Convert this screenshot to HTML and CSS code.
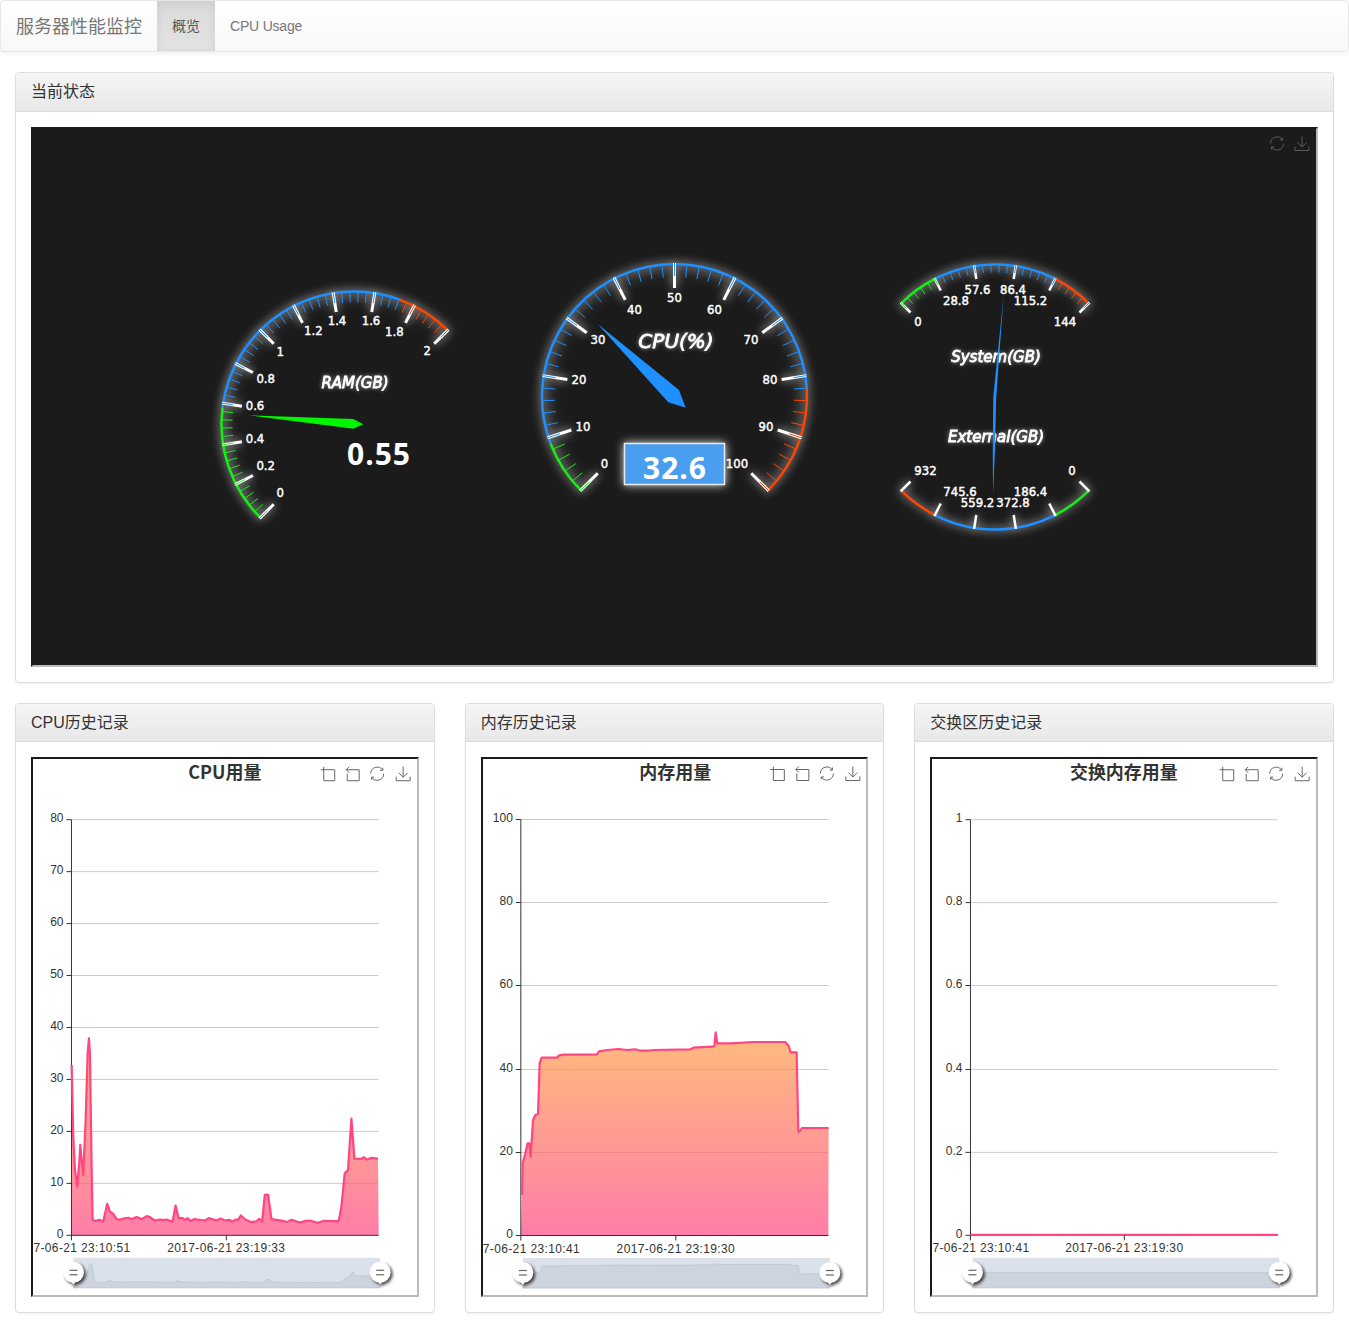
FILE: index.html

```html
<!DOCTYPE html>
<html lang="zh-CN">
<head>
    <meta charset="UTF-8">
    <title>服务器性能监控</title>
    <link rel="stylesheet" href="styles.css">
</head>
<body>

<nav class="navbar">
    <a class="brand" href="#">服务器性能监控</a>
    <a class="nav-item active" href="#">概览</a>
    <a class="nav-item" href="#">CPU Usage</a>
</nav>

<div class="container">
    <div class="panel">
        <div class="panel-heading">当前状态</div>
        <div class="panel-body">
            <div class="chart chart-dark" id="gauges"></div>
        </div>
    </div>

    <div class="row">
        <div class="panel">
            <div class="panel-heading">CPU历史记录</div>
            <div class="panel-body">
                <div class="chart" id="cpuChart"></div>
            </div>
        </div>
        <div class="panel">
            <div class="panel-heading">内存历史记录</div>
            <div class="panel-body">
                <div class="chart" id="memChart"></div>
            </div>
        </div>
        <div class="panel">
            <div class="panel-heading">交换区历史记录</div>
            <div class="panel-body">
                <div class="chart" id="swapChart"></div>
            </div>
        </div>
    </div>
</div>

<script src="charts.js"></script>
</body>
</html>
```

FILE: styles.css

```css
body { margin: 0; font-family: "Liberation Sans", "Noto Sans CJK SC", sans-serif; font-size: 14px; color: #333; background: #fff; }
a { text-decoration: none; }

.navbar { display: flex; height: 52px; box-sizing: border-box; margin-bottom: 20px; border: 1px solid #e7e7e7; border-radius: 4px; background: linear-gradient(#fff, #f8f8f8); box-shadow: 0 1px 5px rgba(0, 0, 0, .075); }
.brand { padding: 1px 15px 0 15px; font-size: 18px; line-height: 50px; color: #777; }
.nav-item { padding: 0 15px; line-height: 50px; color: #777; letter-spacing: -.2px; }
.nav-item.active { color: #555; letter-spacing: 0; background: linear-gradient(#dbdbdb, #e2e2e2); box-shadow: inset 0 3px 9px rgba(0, 0, 0, .075); }

.container { padding: 0 15px; }
.row { display: grid; grid-template-columns: repeat(3, 1fr); gap: 30px; }

.panel { margin-bottom: 20px; border: 1px solid #ddd; border-radius: 4px; background: #fff; box-shadow: 0 1px 2px rgba(0, 0, 0, .05); }
.panel-heading { padding: 10px 15px; font-size: 16px; line-height: 17.6px; color: #333; border-bottom: 1px solid #ddd; border-radius: 3px 3px 0 0; background: linear-gradient(#f5f5f5, #e8e8e8); }
.panel-body { padding: 15px; }

.chart { height: 540px; box-sizing: border-box; border: 2px solid; border-color: #1b1b1b #bbb #bbb #1b1b1b; background: #fff; overflow: hidden; }
.chart-dark { background: #1b1b1b; }
.chart svg { display: block; width: 100%; height: 100%; }

/* gauges */
.glow { filter: drop-shadow(0 0 5px rgba(255, 255, 255, .9)); }
.gauge-label { font-family: "DejaVu Sans", sans-serif; font-size: 11.7px; fill: #fff; stroke: #fff; stroke-width: .45px; text-anchor: middle; dominant-baseline: central; }
.gauge-title { font-family: "DejaVu Sans", sans-serif; font-style: italic; fill: #fff; stroke: #fff; stroke-width: .8px; text-anchor: middle; dominant-baseline: central; filter: drop-shadow(0 0 2px rgba(255, 255, 255, .5)); }
.gauge-title.big { font-size: 20px; }
.gauge-title.mid { font-size: 15px; }
.gauge-value { font-family: "Open Sans", sans-serif; font-size: 30px; font-weight: 700; letter-spacing: 1px; fill: #fff; text-anchor: middle; dominant-baseline: central; }
.value-box { fill: #4a9ef0; stroke: #e8e8e8; stroke-width: 1.5px; }

/* line charts */
.chart-title { font-family: "Noto Sans CJK SC", "Liberation Sans", sans-serif; font-size: 18px; font-weight: 700; fill: #333; text-anchor: middle; dominant-baseline: central; }
.axis-label { font-family: "Liberation Sans", sans-serif; font-size: 12px; fill: #333; dominant-baseline: central; }
.axis-label.end { text-anchor: end; }
.axis-label.mid { text-anchor: middle; letter-spacing: .37px; }
.grid-line { stroke: #ccc; stroke-width: 1; }
.axis-line { stroke: #333; stroke-width: 1; fill: none; }
.series-line { fill: none; stroke: #ff4683; stroke-width: 2.2; stroke-linejoin: round; }
.tool-icon { fill: none; stroke: #666; stroke-width: 1; }
.tool-icon.dim { stroke: #5a5a5a; }
.slider-bg { fill: #dbe1ea; }
.slider-shadow { fill: #ced4de; stroke: #c2c9d4; stroke-width: 1; }
.handle { filter: drop-shadow(2px 2px 1.5px rgba(0, 0, 0, .7)); }
.handle-body { fill: #fff; }
.handle-bar { stroke: #666; stroke-width: 1.2; }
```

FILE: charts.js

```javascript
const NS = "http://www.w3.org/2000/svg";
const BLUE = "#1e90ff", GREEN = "#14f014", RED = "#ff4500";

function el(parent, tag, attrs, text) {
    const node = document.createElementNS(NS, tag);
    for (const k in attrs) node.setAttribute(k, attrs[k]);
    if (text !== undefined) node.textContent = text;
    parent.appendChild(node);
    return node;
}

function polar(cx, cy, r, deg) {
    const a = deg * Math.PI / 180;
    return [cx + r * Math.cos(a), cy - r * Math.sin(a)];
}

function makeSvg(id, viewBox) {
    return el(document.getElementById(id), "svg", { viewBox: viewBox });
}

function colorAt(ranges, f) {
    for (const r of ranges) if (f <= r[0] + 0.0001) return r[1];
    return ranges[ranges.length - 1][1];
}

function drawGauge(svg, g) {
    const group = el(svg, "g", { class: "glow" });
    const span = g.end - g.start;
    const ang = f => g.start + span * f;
    let from = 0;
    g.ranges.forEach(r => {
        const p1 = polar(g.cx, g.cy, g.r, ang(from));
        const p2 = polar(g.cx, g.cy, g.r, ang(r[0]));
        const large = Math.abs(span * (r[0] - from)) > 180 ? 1 : 0;
        el(group, "path", {
            d: `M${p1[0]} ${p1[1]}A${g.r} ${g.r} 0 ${large} ${span < 0 ? 1 : 0} ${p2[0]} ${p2[1]}`,
            fill: "none", stroke: r[1], "stroke-width": 2.5
        });
        from = r[0];
    });
    const line = (a, r1, r2, color, w) => {
        const p1 = polar(g.cx, g.cy, r1, a), p2 = polar(g.cx, g.cy, r2, a);
        el(group, "line", { x1: p1[0], y1: p1[1], x2: p2[0], y2: p2[1], stroke: color, "stroke-width": w });
    };
    const total = g.splits * 5;
    for (let i = 0; i <= total; i++) {
        const f = i / total;
        if (i % 5 === 0) {
            line(ang(f), g.r + 1, g.r + 1 - g.major, "#fff", g.majorWidth);
            if (g.minor) line(ang(f), g.r + 1, g.r + 1 - g.minor, colorAt(g.ranges, f), 1);
        } else if (g.minor) {
            line(ang(f), g.r, g.r - g.minor, colorAt(g.ranges, f), 1);
        }
    }
    g.labels.forEach(l => el(svg, "text", { class: "gauge-label", x: l[1], y: l[2] }, l[0]));
}

function drawGauges() {
    const svg = makeSvg("gauges", "33 129 1283 536");

    drawGauge(svg, {
        cx: 354, cy: 424, r: 132.5, start: 225, end: 45, splits: 10, major: 20, minor: 11, majorWidth: 3,
        ranges: [[0.29, GREEN], [0.86, BLUE], [1, RED]],
        labels: [["0", 280.3, 493.3], ["0.2", 265.7, 465.7], ["0.4", 255, 439.3], ["0.6", 255, 405.7], ["0.8", 265.7, 378.7],
            ["1", 280.3, 351.7], ["1.2", 313.3, 331.3], ["1.4", 337, 320.7], ["1.6", 371, 320.7], ["1.8", 394.3, 331.7], ["2", 427.3, 351.3]]
    });
    el(svg, "text", { class: "gauge-title mid", x: 355, y: 382.7 }, "RAM(GB)");
    el(svg, "polygon", { points: "249.3,415.3 353.3,419 363.3,424.3 353.3,428.7", fill: "#00f500" });
    el(svg, "text", { class: "gauge-value", x: 379, y: 453 }, "0.55");

    drawGauge(svg, {
        cx: 674.5, cy: 396.5, r: 132.5, start: 225, end: -45, splits: 10, major: 25, minor: 13, majorWidth: 3,
        ranges: [[0.09, GREEN], [0.82, BLUE], [1, RED]],
        labels: [["0", 604.5, 463.5], ["10", 583, 427], ["20", 579, 379.5], ["30", 598, 340], ["40", 634.5, 309.5], ["50", 674.5, 297.5],
            ["60", 714.5, 309.5], ["70", 751, 340], ["80", 770, 379.5], ["90", 766, 427], ["100", 737, 463.5]]
    });
    el(svg, "text", { class: "gauge-title big", x: 676, y: 341 }, "CPU(%)");
    el(svg, "polygon", { points: "597.7,324 679,390 685.7,407.7 668.3,402.3", fill: BLUE });
    el(svg, "rect", { class: "value-box glow", x: 624.5, y: 443.5, width: 100, height: 41 });
    el(svg, "text", { class: "gauge-value", x: 675, y: 467 }, "32.6");

    drawGauge(svg, {
        cx: 995, cy: 397, r: 132.5, start: 135, end: 45, splits: 5, major: 14, minor: 8, majorWidth: 2.5,
        ranges: [[0.2, GREEN], [0.8, BLUE], [1, RED]],
        labels: [["0", 918, 321.5], ["28.8", 956, 300.5], ["57.6", 977.5, 290], ["86.4", 1013, 290], ["115.2", 1030.5, 300.5], ["144", 1065, 321.5]]
    });
    drawGauge(svg, {
        cx: 995, cy: 397, r: 132.5, start: 225, end: 315, splits: 5, major: 14, minor: 0, majorWidth: 2.5,
        ranges: [[0.2, RED], [0.8, BLUE], [1, GREEN]],
        labels: [["932", 925.5, 470.5], ["745.6", 960, 491.5], ["559.2", 977.5, 502.5], ["372.8", 1013, 502.5], ["186.4", 1030.5, 491.5], ["0", 1072, 470.5]]
    });
    el(svg, "text", { class: "gauge-title mid", x: 996, y: 356.5 }, "System(GB)");
    el(svg, "text", { class: "gauge-title mid", x: 996, y: 436.5 }, "External(GB)");
    el(svg, "polygon", { points: "1003.7,295 996.2,397 995,450 993,495 992.8,450 993.3,397", fill: BLUE });

    toolIcon(svg, "refresh", 1270, 136.5, true);
    toolIcon(svg, "download", 1295, 136.5, true);
}

function toolIcon(svg, name, x, y, dim) {
    const paths = {
        zoom: "M3 0V14H14V3H0",
        back: "M2 7V14H14V3H1M4 0L1 3L4 6",
        refresh: "M.5 7A6.5 6.5 0 0 1 12.5 3.5M13.5 7A6.5 6.5 0 0 1 1.5 10.5M12.6 1V3.6H10M1.4 13V10.4H4",
        download: "M7 0V10.5M2.5 6L7 10.5L11.5 6M0 10V14H14V10"
    };
    el(svg, "path", {
        class: dim ? "tool-icon dim" : "tool-icon",
        d: paths[name], transform: `translate(${x} ${y})`
    });
}

function drawHandle(svg, x) {
    const g = el(svg, "g", { class: "handle" });
    el(g, "circle", { class: "handle-body", cx: x, cy: 1272.5, r: 10.5 });
    el(g, "polygon", { class: "handle-body", points: `${x - 2},1282 ${x + 2},1282 ${x},1285` });
    el(g, "line", { class: "handle-bar", x1: x - 4, y1: 1270.5, x2: x + 4, y2: 1270.5 });
    el(g, "line", { class: "handle-bar", x1: x - 4, y1: 1275, x2: x + 4, y2: 1275 });
}

function drawLineChart(id, c) {
    const svg = makeSvg(id, c.viewBox);
    const x0 = c.axis + 0.5, x1 = x0 + 307.5;
    const top = 819.5, bottom = 1235.5, n = c.yLabels.length - 1;

    el(svg, "text", { class: "chart-title", x: c.titleX, y: 771 }, c.title);
    ["zoom", "back", "refresh", "download"].forEach((name, i) => {
        toolIcon(svg, name, c.axis + [250, 274.5, 299.5, 325.5][i], 766.5);
    });

    c.yLabels.forEach((label, i) => {
        const y = Math.round(bottom - i * (bottom - top) / n - 0.5) + 0.5;
        if (i > 0) el(svg, "line", { class: "grid-line", x1: x0, y1: y, x2: x1, y2: y });
        el(svg, "line", { class: "axis-line", x1: x0 - 5, y1: y, x2: x0, y2: y });
        el(svg, "text", { class: "axis-label end", x: x0 - 8, y: y - 1.5 }, label);
    });

    const defs = el(svg, "defs", {});
    const grad = el(defs, "linearGradient", { id: id + "Fill", x1: 0, y1: 0, x2: 0, y2: 1 });
    el(grad, "stop", { offset: 0, "stop-color": "#ff9e44", "stop-opacity": .7 });
    el(grad, "stop", { offset: 1, "stop-color": "#ff4683", "stop-opacity": .7 });

    const pts = c.points.map(p => p.join(",")).join(" ");
    el(svg, "polygon", { points: `${x0},${bottom} ${pts} ${x1},${bottom}`, fill: `url(#${id}Fill)` });

    el(svg, "line", { class: "axis-line", x1: x0, y1: top, x2: x0, y2: bottom });
    el(svg, "line", { class: "axis-line", x1: x0, y1: bottom, x2: x1, y2: bottom });
    el(svg, "polyline", { class: "series-line", points: pts });
    c.xTicks.forEach(t => {
        el(svg, "line", { class: "axis-line", x1: t[0], y1: bottom, x2: t[0], y2: bottom + 5 });
        el(svg, "text", { class: "axis-label mid", x: t[0], y: 1248.5 }, t[1]);
    });

    // data zoom under the chart
    const sx0 = c.axis + 2.5, sw = 307;
    el(svg, "rect", { class: "slider-bg", x: sx0, y: 1258, width: sw, height: 30 });
    const shadow = c.points.map(p => {
        const v = (1235 - p[1]) / c.shadow.unit;
        return `${sx0 + (p[0] - x0) / 307.5 * sw},${c.shadow.base - v * c.shadow.scale}`;
    }).join(" ");
    el(svg, "polygon", { class: "slider-shadow", points: `${sx0},1288 ${shadow} ${sx0 + sw},1288` });
    drawHandle(svg, sx0);
    drawHandle(svg, sx0 + sw);
}

const toPage = (list, ox, oy) => list.map(p => [+(ox + p[0] / 3).toFixed(1), +(oy + p[1] / 3).toFixed(1)]);

const cpuPoints = toPage([[155,135],[160,350],[165,450],[172,500],[178,430],[181,375],[185,420],[190,465],[197,300],[203,100],[207,55],[210,100],[215,450],[218,600],[228,604],[238,600],[250,605],[262,552],[270,575],[280,582],[290,598],[300,600],[310,596],[325,594],[335,598],[350,592],[365,598],[380,589],[390,592],[405,602],[420,599],[430,601],[440,599],[458,606],[467,557],[476,594],[488,595],[495,600],[503,595],[513,604],[522,598],[555,602],[567,595],[590,602],[602,596],[615,602],[628,600],[638,605],[648,599],[655,600],[663,587],[675,598],[690,606],[710,605],[718,597],[727,606],[735,525],[745,524],[755,598],[790,603],[800,607],[815,600],[840,608],[855,604],[870,602],[895,609],[912,603],[945,604],[957,604],[965,560],[975,460],[985,450],[995,296],[1004,416],[1025,417],[1032,412],[1042,419],[1055,414],[1075,416]], 20, 1020);

const memPoints = toPage([[155,525],[157,430],[165,400],[172,370],[177,370],[181,410],[188,300],[195,285],[203,282],[208,130],[214,113],[260,113],[265,107],[280,104],[380,103],[386,94],[410,90],[445,87],[470,90],[495,88],[510,92],[535,92],[550,90],[660,88],[670,83],[725,80],[732,78],[736,37],[741,70],[780,70],[850,66],[945,66],[955,78],[961,97],[979,97],[984,335],[990,332],[995,324],[1075,324]], 471, 1020);

drawGauges();

drawLineChart("cpuChart", {
    viewBox: "33 759 384 536", axis: 71, title: "CPU用量", titleX: 225,
    yLabels: ["0", "10", "20", "30", "40", "50", "60", "70", "80"],
    points: cpuPoints,
    xTicks: [[71.5, "2017-06-21 23:10:51"], [226.5, "2017-06-21 23:19:33"]],
    shadow: { unit: 5.2, base: 1284, scale: 0.54 }
});

drawLineChart("memChart", {
    viewBox: "484 759 383 536", axis: 521, title: "内存用量", titleX: 676,
    yLabels: ["0", "20", "40", "60", "80", "100"],
    points: memPoints,
    xTicks: [[521.5, "2017-06-21 23:10:41"], [676.5, "2017-06-21 23:19:30"]],
    shadow: { unit: 4.16, base: 1285.7, scale: 0.46 }
});

drawLineChart("swapChart", {
    viewBox: "932 759 384 536", axis: 970, title: "交换内存用量", titleX: 1124,
    yLabels: ["0", "0.2", "0.4", "0.6", "0.8", "1"],
    points: [[970.5, 1235], [1278, 1235]],
    xTicks: [[970.5, "2017-06-21 23:10:41"], [1124.5, "2017-06-21 23:19:30"]],
    shadow: { unit: 1, base: 1273, scale: 0 }
});
```
